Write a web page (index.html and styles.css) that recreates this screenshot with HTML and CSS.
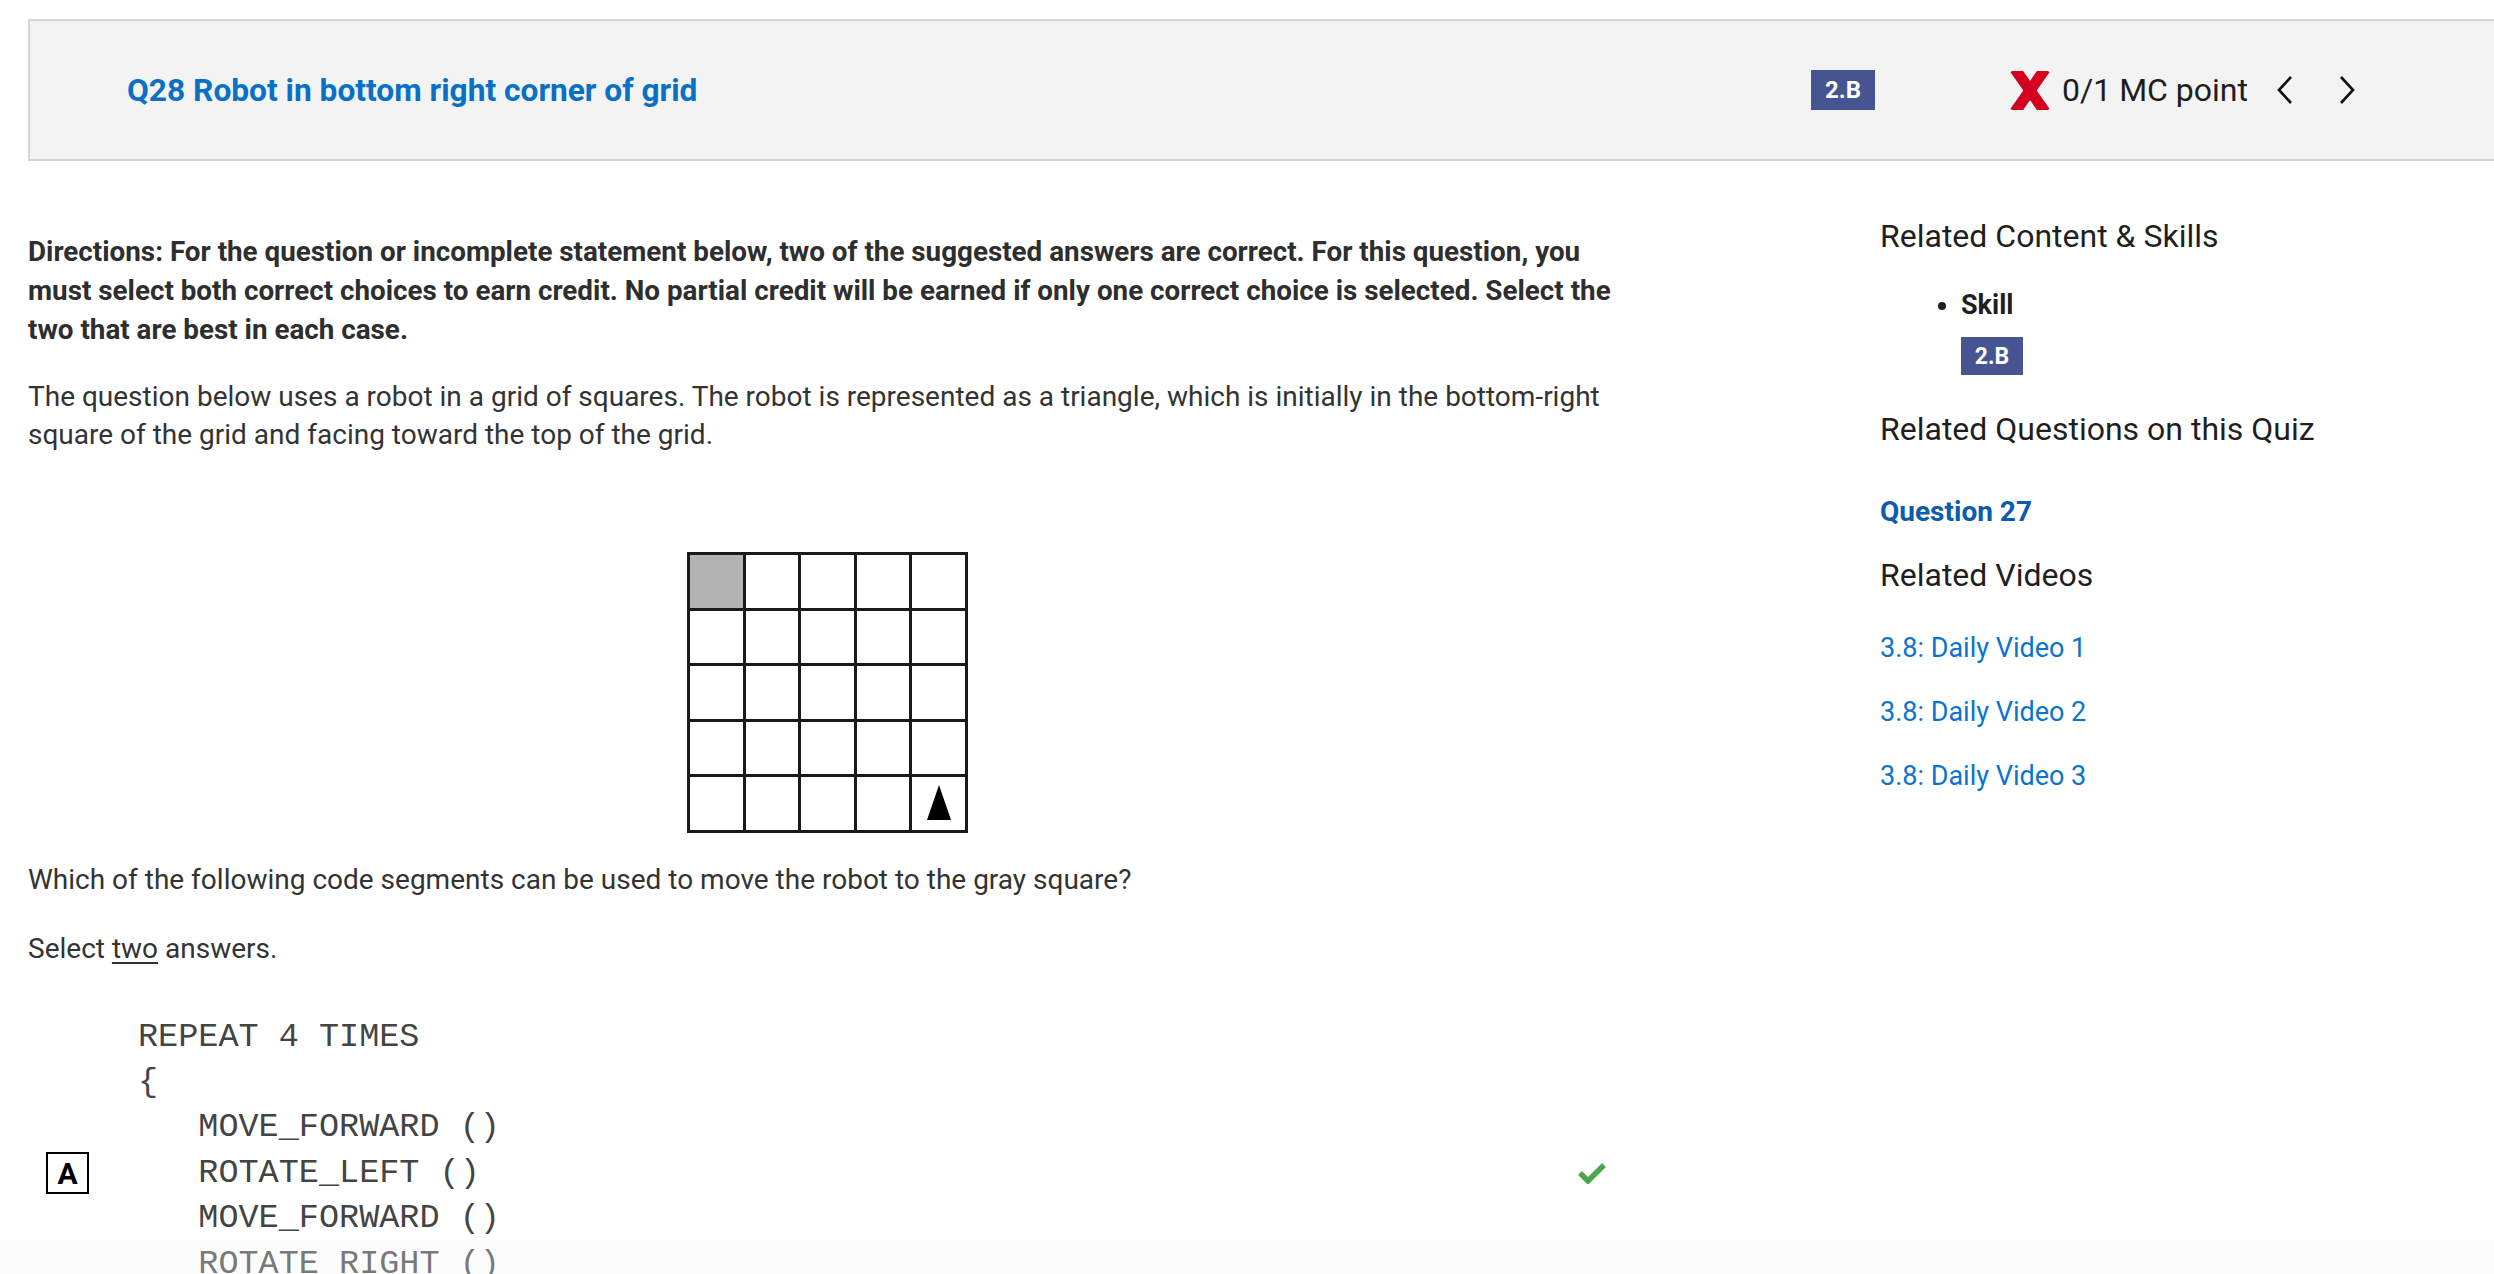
FILE: index.html
```html
<!DOCTYPE html>
<html lang="en">
<head>
<meta charset="utf-8">
<title>Q28 Robot in bottom right corner of grid</title>
<link rel="stylesheet" href="styles.css">
</head>
<body>
<div class="page">
  <header class="qhead">
    <a class="qtitle" href="#">Q28 Robot in bottom right corner of grid</a>
    <span class="badge badge-head">2.B</span>
    <div class="score">
      <svg class="xicon" viewBox="0 0 40 39" width="40" height="39" aria-hidden="true">
        <line x1="5" y1="-2" x2="35" y2="41" stroke="#d3001f" stroke-width="11"/>
        <line x1="35" y1="-2" x2="5" y2="41" stroke="#d3001f" stroke-width="11"/>
      </svg>
      <span class="score-text">0/1 MC point</span>
      <svg class="chev chev-prev" viewBox="0 0 18 28" width="18" height="28" aria-hidden="true">
        <polyline points="15,1 3,14 15,27" fill="none" stroke="#111" stroke-width="2.6"/>
      </svg>
      <svg class="chev chev-next" viewBox="0 0 18 28" width="18" height="28" aria-hidden="true">
        <polyline points="3,1 15,14 3,27" fill="none" stroke="#111" stroke-width="2.6"/>
      </svg>
    </div>
  </header>

  <div class="layout">
    <main class="question">
      <p class="directions">Directions: For the question or incomplete statement below, two of the suggested answers are correct. For this question, you must select both correct choices to earn credit. No partial credit will be earned if only one correct choice is selected. Select the two that are best in each case.</p>
      <p class="para">The question below uses a robot in a grid of squares. The robot is represented as a triangle, which is initially in the bottom-right square of the grid and facing toward the top of the grid.</p>

      <div class="figure">
        <div class="grid">
          <div class="cell gray"></div><div class="cell"></div><div class="cell"></div><div class="cell"></div><div class="cell"></div>
          <div class="cell"></div><div class="cell"></div><div class="cell"></div><div class="cell"></div><div class="cell"></div>
          <div class="cell"></div><div class="cell"></div><div class="cell"></div><div class="cell"></div><div class="cell"></div>
          <div class="cell"></div><div class="cell"></div><div class="cell"></div><div class="cell"></div><div class="cell"></div>
          <div class="cell"></div><div class="cell"></div><div class="cell"></div><div class="cell"></div><div class="cell robot"><span class="tri"></span></div>
        </div>
      </div>

      <p class="para ask">Which of the following code segments can be used to move the robot to the gray square?</p>
      <p class="para select">Select <u>two</u> answers.</p>

      <div class="answer">
        <span class="letter">A</span>
        <pre class="code">REPEAT 4 TIMES
{
   MOVE_FORWARD ()
   ROTATE_LEFT ()
   MOVE_FORWARD ()
   ROTATE_RIGHT ()
}</pre>
        <svg class="check" viewBox="0 0 28 22" width="28" height="22" aria-hidden="true">
          <polyline points="2,11 10,19 26,3" fill="none" stroke="#4ba74b" stroke-width="5.5"/>
        </svg>
      </div>
    </main>

    <aside class="side">
      <h2 class="side-h h-content">Related Content &amp; Skills</h2>
      <ul class="skills">
        <li class="skill">Skill</li>
      </ul>
      <span class="badge badge-side">2.B</span>
      <h2 class="side-h h-questions">Related Questions on this Quiz</h2>
      <a class="qlink" href="#">Question 27</a>
      <h2 class="side-h h-videos">Related Videos</h2>
      <a class="vlink v1" href="#">3.8: Daily Video 1</a>
      <a class="vlink" href="#">3.8: Daily Video 2</a>
      <a class="vlink" href="#">3.8: Daily Video 3</a>
    </aside>
  </div>
</div>
<div class="footer-fade"></div>
</body>
</html>
```

FILE: styles.css
```css
html, body {
  margin: 0;
  padding: 0;
  background: #ffffff;
  overflow: hidden;
}

body {
  font-family: Roboto, "Liberation Sans", Arial, sans-serif;
  color: #333333;
}

.page {
  padding: 19px 0 0 28px;
}

/* Header bar */
.qhead {
  display: flex;
  align-items: center;
  height: 138px;
  background: #f3f3f3;
  border: 2px solid #d5d5d9;
  border-right: none;
  padding: 0 138px 0 97px;
}

.qtitle {
  flex: 1;
  font-size: 31.7px;
  font-weight: 700;
  color: #0a70c6;
  text-decoration: none;
}

.badge {
  display: inline-flex;
  align-items: center;
  justify-content: center;
  background: #465592;
  color: #ffffff;
  font-weight: 700;
  font-size: 24px;
}

.badge-head {
  width: 64px;
  height: 40px;
  margin-right: 135px;
}

.score {
  display: flex;
  align-items: center;
}

.xicon {
  display: block;
  margin-right: 12px;
}

.score-text {
  font-size: 32px;
  color: #1d1d1d;
  margin-right: 28px;
}

.chev {
  display: block;
}

.chev-prev {
  margin-right: 44px;
}

/* Layout */
.layout {
  display: flex;
  align-items: flex-start;
  padding-top: 56px;
}

.question {
  width: 1600px;
  flex: none;
}

.directions {
  margin: 15px 0 0;
  font-size: 27.8px;
  line-height: 39px;
  font-weight: 700;
  color: #2e2e2e;
}

.para {
  margin: 29px 0 0;
  font-size: 28px;
  line-height: 38px;
  color: #333333;
}

.figure {
  display: flex;
  margin-top: 98px;
}

.grid {
  display: grid;
  grid-template-columns: repeat(5, 52.5px);
  grid-template-rows: repeat(5, 52.5px);
  gap: 3px;
  padding: 3px;
  background: #1a1a1a;
  margin-left: 659px;
}

.cell {
  background: #ffffff;
}

.cell.gray {
  background: #b3b3b3;
}

.robot {
  display: flex;
  align-items: flex-end;
  justify-content: center;
}

.tri {
  width: 0;
  height: 0;
  border-left: 12px solid transparent;
  border-right: 12px solid transparent;
  border-bottom: 35px solid #000000;
  margin-bottom: 10px;
  margin-left: 2px;
}

.para.ask {
  margin-top: 28.5px;
}

.para.select {
  margin-top: 31px;
}

.select u {
  text-underline-offset: 4px;
}

/* Answer */
.answer {
  display: flex;
  align-items: center;
  margin-top: 46.5px;
}

.letter {
  display: flex;
  align-items: center;
  justify-content: center;
  width: 39px;
  height: 38px;
  border: 2px solid #000000;
  margin-left: 18px;
  margin-right: 49px;
  font-weight: 700;
  font-size: 30px;
  color: #000000;
  flex: none;
}

.code {
  flex: 1;
  margin: 0;
  font-family: "Liberation Mono", "Courier New", monospace;
  font-size: 33.5px;
  line-height: 45.4px;
  color: #444444;
}

.check {
  display: block;
  margin-right: 22px;
  flex: none;
}

/* Sidebar */
.side {
  margin-left: 252px;
  margin-top: 1px;
  display: flex;
  flex-direction: column;
  align-items: flex-start;
}

.side-h {
  margin: 0;
  font-size: 32px;
  line-height: 36px;
  font-weight: 400;
  color: #1f1f1f;
}

.skills {
  margin: 34px 0 0;
  padding-left: 81px;
  font-size: 27px;
  line-height: 34px;
  font-weight: 700;
  color: #1f1f1f;
}

.badge-side {
  width: 62px;
  height: 38px;
  margin-top: 15px;
  margin-left: 81px;
  font-size: 23px;
}

.h-questions {
  margin-top: 36px;
}

.qlink {
  margin-top: 48px;
  font-size: 28px;
  line-height: 34px;
  font-weight: 700;
  color: #0b5cad;
  text-decoration: none;
}

.h-videos {
  margin-top: 28px;
}

.vlink {
  margin-top: 30px;
  font-size: 27px;
  line-height: 34px;
  color: #0a74cf;
  text-decoration: none;
}

.vlink.v1 {
  margin-top: 38px;
}

.footer-fade {
  position: fixed;
  left: 0;
  right: 0;
  bottom: 0;
  height: 34px;
  background: rgba(246, 246, 246, 0.3);
}
```
